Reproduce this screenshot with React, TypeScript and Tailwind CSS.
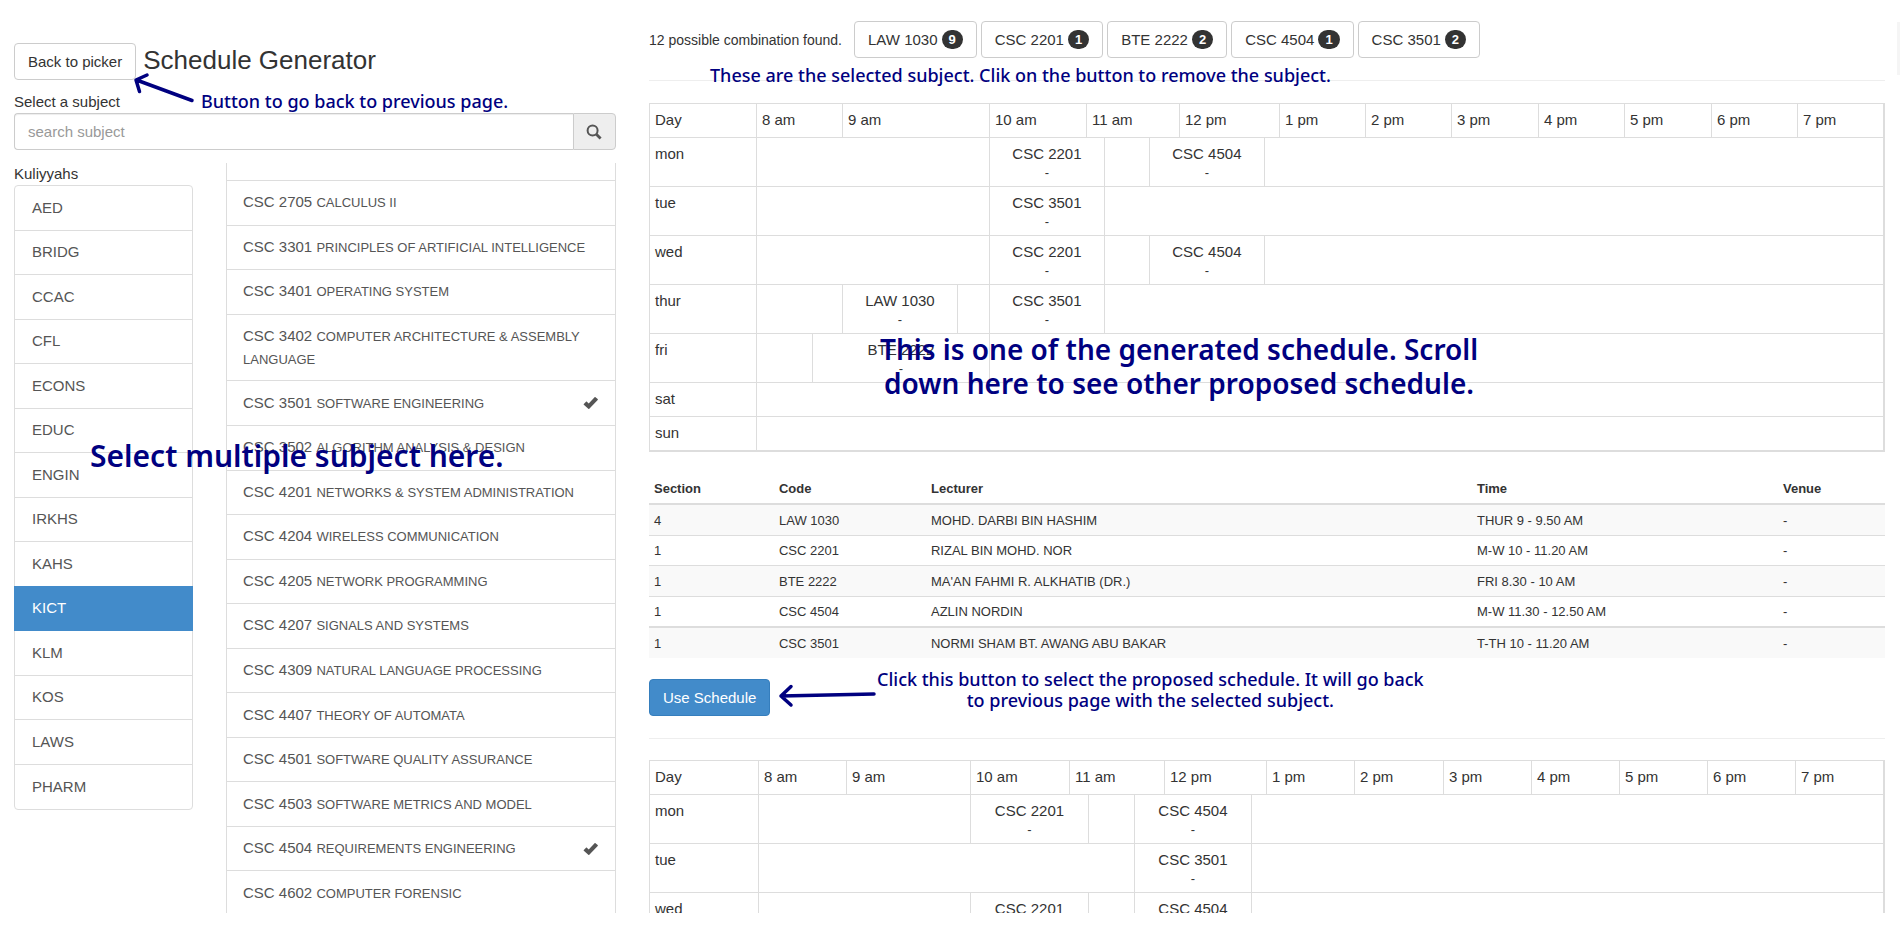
type Slot = { span: number; code?: string };
type Day = { name: string; slots: Slot[] };
type Timetable = { widths: number[]; hourSpans: number[]; days: Day[] };
type Subject = { code: string; title: string; tall?: boolean; picked?: boolean };

const kuliyyahs = [
  "AED", "BRIDG", "CCAC", "CFL", "ECONS", "EDUC", "ENGIN",
  "IRKHS", "KAHS", "KICT", "KLM", "KOS", "LAWS", "PHARM",
];

const subjects: Subject[] = [
  { code: "CSC 2705", title: "CALCULUS II" },
  { code: "CSC 3301", title: "PRINCIPLES OF ARTIFICIAL INTELLIGENCE" },
  { code: "CSC 3401", title: "OPERATING SYSTEM" },
  { code: "CSC 3402", title: "COMPUTER ARCHITECTURE & ASSEMBLY LANGUAGE", tall: true },
  { code: "CSC 3501", title: "SOFTWARE ENGINEERING", picked: true },
  { code: "CSC 3502", title: "ALGORITHM ANALYSIS & DESIGN" },
  { code: "CSC 4201", title: "NETWORKS & SYSTEM ADMINISTRATION" },
  { code: "CSC 4204", title: "WIRELESS COMMUNICATION" },
  { code: "CSC 4205", title: "NETWORK PROGRAMMING" },
  { code: "CSC 4207", title: "SIGNALS AND SYSTEMS" },
  { code: "CSC 4309", title: "NATURAL LANGUAGE PROCESSING" },
  { code: "CSC 4407", title: "THEORY OF AUTOMATA" },
  { code: "CSC 4501", title: "SOFTWARE QUALITY ASSURANCE" },
  { code: "CSC 4503", title: "SOFTWARE METRICS AND MODEL" },
  { code: "CSC 4504", title: "REQUIREMENTS ENGINEERING", picked: true },
  { code: "CSC 4602", title: "COMPUTER FORENSIC" },
];

const selected = [
  { code: "LAW 1030", count: 9 },
  { code: "CSC 2201", count: 1 },
  { code: "BTE 2222", count: 2 },
  { code: "CSC 4504", count: 1 },
  { code: "CSC 3501", count: 2 },
];

const sections = [
  ["4", "LAW 1030", "MOHD. DARBI BIN HASHIM", "THUR 9 - 9.50 AM", "-"],
  ["1", "CSC 2201", "RIZAL BIN MOHD. NOR", "M-W 10 - 11.20 AM", "-"],
  ["1", "BTE 2222", "MA'AN FAHMI R. ALKHATIB (DR.)", "FRI 8.30 - 10 AM", "-"],
  ["1", "CSC 4504", "AZLIN NORDIN", "M-W 11.30 - 12.50 AM", "-"],
  ["1", "CSC 3501", "NORMI SHAM BT. AWANG ABU BAKAR", "T-TH 10 - 11.20 AM", "-"],
];

const hours = ["8 am", "9 am", "10 am", "11 am", "12 pm", "1 pm", "2 pm", "3 pm", "4 pm", "5 pm", "6 pm", "7 pm"];

// Column widths are relative; the first column holds the day name.
const firstSchedule: Timetable = {
  widths: [107, 56, 30, 115, 32, 97, 18, 45, 30, 85, 15, 86, 86, 87, 86, 87, 86, 86],
  hourSpans: [2, 2, 1, 3, 2, 1, 1, 1, 1, 1, 1, 1],
  days: [
    { name: "mon", slots: [{ span: 4 }, { span: 2, code: "CSC 2201" }, { span: 1 }, { span: 2, code: "CSC 4504" }, { span: 8 }] },
    { name: "tue", slots: [{ span: 4 }, { span: 2, code: "CSC 3501" }, { span: 11 }] },
    { name: "wed", slots: [{ span: 4 }, { span: 2, code: "CSC 2201" }, { span: 1 }, { span: 2, code: "CSC 4504" }, { span: 8 }] },
    { name: "thur", slots: [{ span: 2 }, { span: 1, code: "LAW 1030" }, { span: 1 }, { span: 2, code: "CSC 3501" }, { span: 11 }] },
    { name: "fri", slots: [{ span: 1 }, { span: 3, code: "BTE 2222" }, { span: 13 }] },
    { name: "sat", slots: [{ span: 17 }] },
    { name: "sun", slots: [{ span: 17 }] },
  ],
};

const secondSchedule: Timetable = {
  widths: [109, 88, 124, 99, 19, 46, 30, 87, 15, 88, 89, 88, 88, 88, 88, 88],
  hourSpans: [1, 1, 1, 3, 2, 1, 1, 1, 1, 1, 1, 1],
  days: [
    { name: "mon", slots: [{ span: 2 }, { span: 2, code: "CSC 2201" }, { span: 1 }, { span: 2, code: "CSC 4504" }, { span: 8 }] },
    { name: "tue", slots: [{ span: 5 }, { span: 2, code: "CSC 3501" }, { span: 8 }] },
    { name: "wed", slots: [{ span: 2 }, { span: 2, code: "CSC 2201" }, { span: 1 }, { span: 2, code: "CSC 4504" }, { span: 8 }] },
  ],
};

function SearchIcon() {
  return (
    <svg width="16" height="16" viewBox="0 0 16 16" fill="none" stroke="#555" aria-hidden="true">
      <circle cx="6.6" cy="6.4" r="5" strokeWidth="2" />
      <path d="M10.3 10.3 14.6 14.6" strokeWidth="2.8" />
    </svg>
  );
}

function CheckIcon() {
  return (
    <svg width="16" height="14" viewBox="0 0 16 14" fill="#555" aria-hidden="true">
      <path d="M.8 8 3 5.8c.3-.3.6-.3.9 0L5.7 7.600 11.600 1.200c.3-.3.6-.3.9 0l2.200 1.900c.3.3.3.6 0 .9L6.300 12.700c-.3.3-.7.3-1 0L.8 8.800c-.3-.3-.3-.5 0-.8Z" />
    </svg>
  );
}

function ScheduleTable({ schedule }: { schedule: Timetable }) {
  const total = schedule.widths.reduce((sum, width) => sum + width, 0);
  return (
    <table className="w-full table-fixed border-separate border-spacing-0 border-r-2 border-b-2 border-[#ddd] leading-[22px]">
      <colgroup>
        {schedule.widths.map((width, i) => (
          <col key={i} style={{ width: `${(width / total) * 100}%` }} />
        ))}
      </colgroup>
      <thead>
        <tr>
          <th scope="col" className="border-t border-l border-[#ddd] px-[5px] pt-[5px] pb-[6px] text-left font-normal">Day</th>
          {hours.map((hour, i) => (
            <th
              key={hour}
              scope="col"
              colSpan={schedule.hourSpans[i]}
              className="border-t border-l border-[#ddd] px-[5px] pt-[5px] pb-[6px] text-left font-normal"
            >
              {hour}
            </th>
          ))}
        </tr>
      </thead>
      <tbody>
        {schedule.days.map((day) => (
          <tr key={day.name}>
            <th scope="row" className="border-t border-l border-[#ddd] px-[5px] pt-[5px] pb-[6px] text-left align-top font-normal">
              {day.name}
            </th>
            {day.slots.map((slot, i) => (
              <td
                key={i}
                colSpan={slot.span}
                className="border-t border-l border-[#ddd] px-[5px] pt-[5px] pb-[6px] text-center align-top"
              >
                {slot.code}
                {slot.code && <div className="text-[13px] leading-[15px]">-</div>}
              </td>
            ))}
          </tr>
        ))}
      </tbody>
    </table>
  );
}

function SectionTable() {
  return (
    <table className="mt-[21px] w-full table-fixed border-separate border-spacing-0 text-[13px]">
      <colgroup>
        <col className="w-[125px]" />
        <col className="w-[152px]" />
        <col />
        <col className="w-[306px]" />
        <col className="w-[107px]" />
      </colgroup>
      <thead>
        <tr>
          {["Section", "Code", "Lecturer", "Time", "Venue"].map((name) => (
            <th key={name} scope="col" className="border-b border-[#ddd] px-[5px] pt-[6px] pb-[5px] text-left leading-[19px] font-bold">
              {name}
            </th>
          ))}
        </tr>
      </thead>
      <tbody>
        {sections.map((row) => (
          <tr key={row[1]} className="group odd:bg-[#f9f9f9]">
            {row.map((value, i) => (
              <td
                key={i}
                className="border-t border-[#ddd] px-[5px] pt-[6px] pb-[5px] leading-[18px] group-odd:pt-[7px] group-last:border-t-2 group-last:pt-[6px]"
              >
                {value}
              </td>
            ))}
          </tr>
        ))}
      </tbody>
    </table>
  );
}

export default function App() {
  return (
    <main className="relative flex h-screen overflow-hidden bg-white pb-[21px] font-['Liberation_Sans',Arial,sans-serif] text-[15px] leading-[22px] text-[#333]">
      <section className="relative flex h-full w-1/3 flex-col pt-[43px] pr-[18px] pl-[14px]">
        <div className="flex items-start gap-[7px]">
          <button type="button" className="h-[37px] rounded-[4px] border border-[#ccc] bg-white px-[13px]">Back to picker</button>
          <h1 className="pt-[2px] text-[26px] leading-[30px]">Schedule Generator</h1>
        </div>
        <label htmlFor="subject-search" className="mt-[11px] block">Select a subject</label>
        <div className="flex h-[37px] shrink-0">
          <input
            id="subject-search"
            type="text"
            placeholder="search subject"
            className="min-w-0 flex-1 rounded-l-[4px] border border-r-0 border-[#ccc] px-[13px] shadow-[inset_0_1px_1px_rgba(0,0,0,0.075)] outline-none placeholder:text-[#999]"
          />
          <button type="button" aria-label="Search" className="flex w-[43px] items-center justify-center rounded-r-[4px] border border-[#ccc] bg-[#eee]">
            <SearchIcon />
          </button>
        </div>
        <div className="mt-[13px] grid min-h-0 flex-1 grid-cols-[179fr_390fr] gap-[33px]">
          <div>
            <h2>Kuliyyahs</h2>
            <ul className="grid min-h-[625px] auto-rows-fr rounded-[4px] border border-[#ddd] text-[#555]">
              {kuliyyahs.map((name) => (
                <li key={name} className="flex border-b border-[#ddd] last:border-b-0">
                  <a
                    href="#"
                    aria-current={name === "KICT" ? "true" : undefined}
                    className="-mx-px flex flex-1 items-center px-[18px] aria-[current]:-my-px aria-[current]:bg-[#428bca] aria-[current]:text-white"
                  >
                    {name}
                  </a>
                </li>
              ))}
            </ul>
          </div>
          <div className="min-h-0 overflow-hidden border-x border-[#ddd] text-[#555]">
            <div className="h-[17px]" />
            <ul className="grid min-h-[735px] auto-rows-fr">
              {subjects.map((subject) => (
                <li key={subject.code} className={subject.tall ? "row-span-3 border-t border-[#ddd]" : "row-span-2 border-t border-[#ddd]"}>
                  <a href="#" className="flex h-full items-center justify-between gap-2 px-[16px]">
                    <span>
                      {subject.code} <span className="text-[13px]">{subject.title}</span>
                    </span>
                    {subject.picked && <CheckIcon />}
                  </a>
                </li>
              ))}
            </ul>
          </div>
        </div>

        <svg className="pointer-events-none absolute top-[70px] left-[130px]" width="70" height="36" viewBox="0 0 70 36" fill="none" stroke="#000080" strokeWidth="3.5" strokeLinecap="round" strokeLinejoin="round" aria-hidden="true">
          <path d="M62 30.500 6.500 10M17 5 6 10 9.500 21.500" />
        </svg>
        <p className="pointer-events-none absolute top-[91px] left-[201px] font-['Noto_Sans',sans-serif] text-[18px] leading-[21px] font-medium whitespace-nowrap text-[#000080]">
          Button to go back to previous page.
        </p>
        <p className="pointer-events-none absolute top-[439px] left-[90px] font-['Noto_Sans',sans-serif] text-[30px] leading-[34px] font-semibold whitespace-nowrap text-[#000080]">
          Select multiple subject here.
        </p>
      </section>

      <section className="relative h-full w-2/3 overflow-hidden pt-[21px] pr-[17px] pl-[15px]">
        <div className="flex items-center gap-1">
          <p className="mr-2 text-[14px]">12 possible combination found.</p>
          {selected.map((item) => (
            <button key={item.code} type="button" className="flex h-[37px] items-center gap-1 rounded-[4px] border border-[#ccc] bg-white px-[13px]">
              {item.code}
              <span className="rounded-[10px] bg-[#333] px-[7px] py-[3px] text-[13px] leading-[13px] font-bold text-white">{item.count}</span>
            </button>
          ))}
        </div>
        <hr className="mt-[22px] mb-[22px] border-t border-[#eee]" />
        <ScheduleTable schedule={firstSchedule} />
        <SectionTable />
        <button type="button" className="mt-[21px] block h-[37px] rounded-[4px] border border-[#357ebd] bg-[#428bca] px-[13px] text-white">
          Use Schedule
        </button>
        <hr className="mt-[22px] mb-[21px] border-t border-[#eee]" />
        <ScheduleTable schedule={secondSchedule} />

        <p className="pointer-events-none absolute top-[65px] left-[76px] font-['Noto_Sans',sans-serif] text-[18px] leading-[21px] font-medium whitespace-nowrap text-[#000080]">
          These are the selected subject. Clik on the button to remove the subject.
        </p>
        <p className="pointer-events-none absolute top-[332px] left-[246px] text-center font-['Noto_Sans',sans-serif] text-[28px] leading-[34px] font-semibold whitespace-nowrap text-[#000080]">
          This is one of the generated schedule. Scroll
          <br />
          down here to see other proposed schedule.
        </p>
        <svg className="pointer-events-none absolute top-[680px] left-[142px]" width="104" height="30" viewBox="0 0 104 30" fill="none" stroke="#000080" strokeWidth="3.5" strokeLinecap="round" strokeLinejoin="round" aria-hidden="true">
          <path d="M98 14 5 16M15 6.500 5 16 15 25" />
        </svg>
        <p className="pointer-events-none absolute top-[669px] left-[243px] text-center font-['Noto_Sans',sans-serif] text-[18px] leading-[21px] font-medium whitespace-nowrap text-[#000080]">
          Click this button to select the proposed schedule. It will go back
          <br />
          to previous page with the selected subject.
        </p>
      </section>
      <div className="absolute top-[22px] right-[2px] h-[53px] w-[3px] bg-[#f5f5f5]" />
    </main>
  );
}
